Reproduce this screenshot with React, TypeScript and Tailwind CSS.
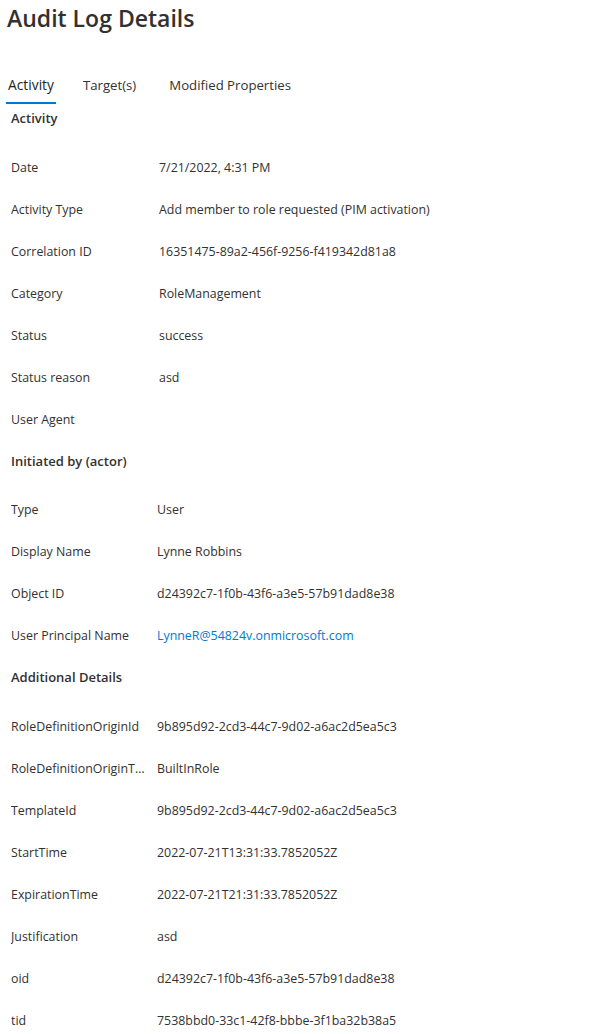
const activity: [string, string][] = [
  ['Date', '7/21/2022, 4:31 PM'],
  ['Activity Type', 'Add member to role requested (PIM activation)'],
  ['Correlation ID', '16351475-89a2-456f-9256-f419342d81a8'],
  ['Category', 'RoleManagement'],
  ['Status', 'success'],
  ['Status reason', 'asd'],
  ['User Agent', ''],
];

const actor: [string, string, boolean?][] = [
  ['Type', 'User'],
  ['Display Name', 'Lynne Robbins'],
  ['Object ID', 'd24392c7-1f0b-43f6-a3e5-57b91dad8e38'],
  ['User Principal Name', 'LynneR@54824v.onmicrosoft.com', true],
];

const additional: [string, string][] = [
  ['RoleDefinitionOriginId', '9b895d92-2cd3-44c7-9d02-a6ac2d5ea5c3'],
  ['RoleDefinitionOriginType', 'BuiltInRole'],
  ['TemplateId', '9b895d92-2cd3-44c7-9d02-a6ac2d5ea5c3'],
  ['StartTime', '2022-07-21T13:31:33.7852052Z'],
  ['ExpirationTime', '2022-07-21T21:31:33.7852052Z'],
  ['Justification', 'asd'],
  ['oid', 'd24392c7-1f0b-43f6-a3e5-57b91dad8e38'],
  ['tid', '7538bbd0-33c1-42f8-bbbe-3f1ba32b38a5'],
];

function Row({ label, value, link, labelW }: { label: string; value: string; link?: boolean; labelW: string }) {
  return (
    <div className="flex items-center h-[42px]">
      <div className={`${labelW} shrink-0 pr-[10px] truncate`}>{label}</div>
      <div className={link ? 'text-[#0078d4]' : ''}>{value}</div>
    </div>
  );
}

export default function App() {
  return (
    <div
      className="w-[599px] h-[1034px] overflow-hidden bg-white text-[#323130] text-[12.4px]"
      style={{ fontFamily: '"Open Sans", "Noto Sans", Arial, sans-serif' }}
    >
      <h1 className="pl-[7px] pt-[2px] text-[23px] leading-[32px] font-semibold">Audit Log Details</h1>

      {/* Tabs */}
      <div className="flex items-end pl-[6px] mt-[41px] text-[13.2px]">
        <div className="flex flex-col">
          <span className="px-[2px] leading-[20px] text-[#201f1e] text-[13.8px]">Activity</span>
          <span className="mt-[7px] h-[2px] bg-[#0078d4]"></span>
        </div>
        <span className="ml-[27px] mb-[9px] leading-[20px]">Target(s)</span>
        <span className="ml-[33px] mb-[9px] leading-[20px]">Modified Properties</span>
      </div>

      <div className="pl-[11px]">
        <div className="h-[30px] flex items-center font-semibold text-[13px]">Activity</div>
        <div className="mt-[13px]">
          {activity.map(([l, v]) => (
            <Row key={l} label={l} value={v} labelW="w-[148px]" />
          ))}
        </div>

        <div className="h-[42px] flex items-center font-semibold text-[13px]">Initiated by (actor)</div>
        <div className="mt-[6px]">
          {actor.map(([l, v, link]) => (
            <Row key={l} label={l} value={v} link={link} labelW="w-[146px]" />
          ))}
        </div>

        <div className="h-[42px] flex items-center font-semibold text-[13px]">Additional Details</div>
        <div className="mt-[7px]">
          {additional.map(([l, v]) => (
            <Row key={l} label={l} value={v} labelW="w-[146px]" />
          ))}
        </div>
      </div>
    </div>
  );
}
